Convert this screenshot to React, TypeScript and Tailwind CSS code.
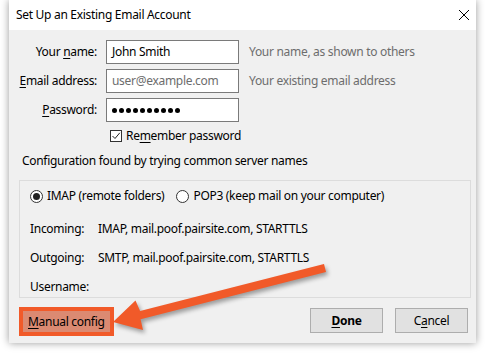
import React from "react";

const font = { fontFamily: '"Segoe UI", "Noto Sans", "Open Sans", sans-serif' };

const Dots = () => (
  <div className="flex items-center gap-[2px]">
    {Array.from({ length: 10 }).map((_, i) => (
      <div key={i} className="w-[5px] h-[5px] rounded-full bg-black" />
    ))}
  </div>
);

const Row = ({
  label,
  value,
  hint,
  muted,
  children,
}: {
  label: React.ReactNode;
  value?: string;
  hint?: string;
  muted?: boolean;
  children?: React.ReactNode;
}) => (
  <div className="flex items-center h-[24px]">
    <div className="w-[88px] text-right text-black">{label}</div>
    <div className="ml-[9px] w-[133px] h-[24px] bg-white border border-[#7a7a7a] flex items-center px-[5px]">
      {children ?? (
        <span className={muted ? "text-[#6d6d6d]" : "text-black"}>{value}</span>
      )}
    </div>
    {hint && <div className="ml-[10px] text-[#6d6d6d]">{hint}</div>}
  </div>
);

const Arrow = () => (
  <svg
    className="absolute left-0 top-0 pointer-events-none"
    width="485"
    height="353"
    viewBox="0 0 485 353"
    style={{ filter: "drop-shadow(2px 3px 2px rgba(0,0,0,0.35))" }}
  >
    <polygon
      fill="#f15a29"
      points="113,322 135.5,300.5 140.1,310.9 324,264.1 326,271.9 140.6,319.2 143,330"
    />
  </svg>
);

export default function App() {
  return (
    <div
      className="relative w-[485px] h-[353px] bg-white overflow-hidden text-[12px] leading-[16px] tracking-[-0.3px]"
      style={font}
    >
      <div className="ml-[9px] w-[467px] h-[343px] bg-[#f0f0f0] flex flex-col shadow-[0_0_8px_rgba(0,0,0,0.4)]">
        {/* title bar */}
        <div className="h-[30px] bg-white flex items-center justify-between pl-[7px] pr-[4px]">
          <span className="text-black">Set Up an Existing Email Account</span>
          <svg width="12" height="12" viewBox="0 0 12 12" className="mr-[2px]">
            <path d="M1 1 L11 11 M11 1 L1 11" stroke="#000" strokeWidth="1" fill="none" />
          </svg>
        </div>

        <div className="flex flex-col pt-[10px]">
          <div className="flex flex-col gap-[5px]">
            <Row
              label={<>Your <u className="underline-offset-2">n</u>ame:</>}
              value="John Smith"
              hint="Your name, as shown to others"
            />
            <Row
              label={<><u className="underline-offset-2">E</u>mail address:</>}
              value="user@example.com"
              hint="Your existing email address"
              muted
            />
            <Row label={<><u className="underline-offset-2">P</u>assword:</>}>
              <Dots />
            </Row>
          </div>

          <div className="flex items-center mt-[8px] pl-[101px] h-[12px]">
            <div className="w-[12px] h-[12px] border border-[#333] bg-white flex items-center justify-center">
              <svg width="10" height="10" viewBox="0 0 10 10">
                <path d="M1.5 5 L4 7.5 L8.8 1.8" stroke="#222" strokeWidth="1" fill="none" />
              </svg>
            </div>
            <span className="ml-[4px] text-black">
              Re<u className="underline-offset-2">m</u>ember password
            </span>
          </div>

          <div className="mt-[11px] pl-[13px] text-black">
            Configuration found by trying common server names
          </div>

          <div className="mt-[11px] ml-[10px] mr-[5px] h-[118px] border border-[#dcdcdc] flex flex-col pl-[10px] pt-[8px]">
            <div className="flex items-center h-[14px]">
              <div className="w-[13px] h-[13px] rounded-full border border-[#333] bg-white flex items-center justify-center">
                <div className="w-[7px] h-[7px] rounded-full bg-[#222]" />
              </div>
              <span className="ml-[4px] text-black">IMAP (remote folders)</span>
              <div className="ml-[12px] w-[13px] h-[13px] rounded-full border border-[#333] bg-white" />
              <span className="ml-[4px] text-black">POP3 (keep mail on your computer)</span>
            </div>
            <div className="flex items-center h-[16px] mt-[18px]">
              <span className="w-[68px] text-black">Incoming:</span>
              <span className="text-black">IMAP, mail.poof.pairsite.com, STARTTLS</span>
            </div>
            <div className="flex items-center h-[16px] mt-[13px]">
              <span className="w-[68px] text-black">Outgoing:</span>
              <span className="text-black">SMTP, mail.poof.pairsite.com, STARTTLS</span>
            </div>
            <div className="flex items-center h-[16px] mt-[13px]">
              <span className="w-[68px] text-black">Username:</span>
            </div>
          </div>

          <div className="flex items-start mt-[9px] ml-[10px] mr-[8px]">
            <div className="w-[95px] h-[29px] bg-[#f15a29] p-[4px]">
              <div className="w-full h-full bg-[#db8a72] flex items-center pl-[5px] text-black">
                <span>
                  <u className="underline-offset-2">M</u>anual config
                </span>
              </div>
            </div>
            <div className="ml-auto mt-[1px] w-[73px] h-[25px] bg-[#e1e1e1] border border-[#adadad] flex items-center justify-center font-bold text-black">
              <span>
                <u className="underline-offset-2">D</u>one
              </span>
            </div>
            <div className="ml-[12px] mt-[1px] w-[73px] h-[25px] bg-[#e1e1e1] border border-[#adadad] flex items-center justify-center text-black">
              <span>
                C<u className="underline-offset-2">a</u>ncel
              </span>
            </div>
          </div>
        </div>
      </div>
      <Arrow />
    </div>
  );
}
